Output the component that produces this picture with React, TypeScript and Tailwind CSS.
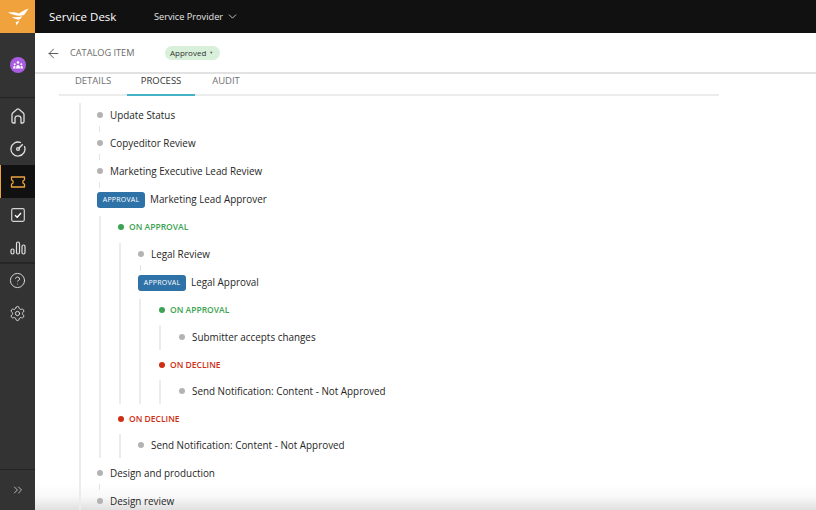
import React from 'react';
import { ArrowLeft, ChevronDown, ChevronsRight, CircleHelp, Settings } from 'lucide-react';

const Logo = () => (
  <svg width="22" height="18" viewBox="0 0 22 18" fill="white">
    <path d="M1 4.5 C6 4 9 4.5 12 5.5 C15 3.5 18 1.5 21.5 0.5 C20 3 18.5 5 17 7 C13 8.5 6 7.5 1 4.5Z" />
    <path d="M5 9 C9 9.3 12 9.2 15.5 8.2 C14.5 9.8 13.5 10.8 12 11.8 C10 11.6 7.5 10.8 5 9Z" />
    <path d="M8.5 14.5 C10 13.8 11 13.2 12.5 12.8 C11.5 14.5 10.5 16 9 17.5 C9.2 16.2 9.2 15.2 8.5 14.5Z" />
  </svg>
);

const HomeIcon = () => (
  <svg width="14" height="16" viewBox="0 0 14 16" fill="none" stroke="#e0e0e0" strokeWidth="1.3" strokeLinejoin="round">
    <path d="M1 6.5 Q1 5.6 1.7 5 L6 1.3 Q7 0.6 8 1.3 L12.3 5 Q13 5.6 13 6.5 V13.5 Q13 15 11.5 15 H10 V10.5 Q10 7.8 7 7.8 Q4 7.8 4 10.5 V15 H2.5 Q1 15 1 13.5Z" />
  </svg>
);

const GaugeIcon = () => (
  <svg width="16" height="16" viewBox="0 0 16 16" fill="none" stroke="#e0e0e0" strokeWidth="1.3" strokeLinecap="round">
    <path d="M10.5 1.5 A7 7 0 1 0 14.5 5.5" />
    <circle cx="8" cy="8" r="1.4" />
    <path d="M9 7 L12.3 3.7" strokeWidth="1.5" />
  </svg>
);

const TicketIcon = () => (
  <svg width="16" height="12" viewBox="0 0 16 12" fill="none" stroke="#f0a33c" strokeWidth="1.3" strokeLinejoin="round">
    <path d="M1.5 1 H14.5 V3.8 Q12.8 4.2 12.8 6 Q12.8 7.8 14.5 8.2 V11 H1.5 V8.2 Q3.2 7.8 3.2 6 Q3.2 4.2 1.5 3.8Z" />
  </svg>
);

const CheckIcon = () => (
  <svg width="14" height="14" viewBox="0 0 14 14" fill="none" stroke="#d4d4d4" strokeWidth="1.2">
    <rect x="0.7" y="0.7" width="12.6" height="12.6" rx="1.5" />
    <path d="M4 7.2 L6.2 9.2 L10 5" strokeWidth="1.4" stroke="white" />
  </svg>
);

const BarsIcon = () => (
  <svg width="16" height="14" viewBox="0 0 16 14" fill="none" stroke="#e0e0e0" strokeWidth="1.2">
    <rect x="1" y="8" width="3" height="5" rx="1.5" />
    <rect x="6.5" y="1" width="3" height="12" rx="1.5" />
    <rect x="12" y="4" width="3" height="9" rx="1.5" />
  </svg>
);

const TeamIcon = () => (
  <svg width="10" height="8" viewBox="0 0 10 8" fill="white">
    <circle cx="5" cy="1.5" r="1.3" />
    <circle cx="1.7" cy="3.2" r="1" />
    <circle cx="8.3" cy="3.2" r="1" />
    <path d="M3 7.5 Q3 4 5 4 Q7 4 7 7.5Z" />
    <path d="M0 7.5 Q0 4.8 1.7 4.8 Q2.6 4.8 2.6 7.5Z" />
    <path d="M10 7.5 Q10 4.8 8.3 4.8 Q7.4 4.8 7.4 7.5Z" />
  </svg>
);

const NavItem: React.FC<{ active?: boolean; children: React.ReactNode }> = ({ active, children }) => (
  <div className={`h-[33px] shrink-0 flex items-center justify-center ${active ? 'bg-[#111111] border-l border-[#f0a33c]' : ''}`}>
    {children}
  </div>
);

const Sidebar = () => (
  <aside className="w-[35px] shrink-0 bg-[#333333] flex flex-col z-20">
    <div className="h-[33px] shrink-0 bg-[#f0a33c] flex items-center justify-center">
      <Logo />
    </div>
    <div className="h-[65px] shrink-0 flex items-center justify-center border-b border-[#232323]">
      <div className="w-4 h-4 rounded-full bg-[#a95ce0] flex items-center justify-center">
        <TeamIcon />
      </div>
    </div>
    <div className="h-[166px] shrink-0 pt-px border-b-2 border-[#262626]">
      <NavItem><HomeIcon /></NavItem>
      <NavItem><GaugeIcon /></NavItem>
      <NavItem active><TicketIcon /></NavItem>
      <NavItem><CheckIcon /></NavItem>
      <NavItem><BarsIcon /></NavItem>
    </div>
    <NavItem><CircleHelp size={17} strokeWidth={1.3} color="#e0e0e0" /></NavItem>
    <NavItem><Settings size={17} strokeWidth={1.3} color="#e0e0e0" /></NavItem>
    <div className="mt-auto h-[41px] border-t border-[#232323] flex items-center justify-center">
      <ChevronsRight size={14} strokeWidth={1.3} color="#e0e0e0" />
    </div>
  </aside>
);

const Step: React.FC<{ text: string; dot?: string }> = ({ text, dot = 'ml-[16px]' }) => (
  <div className="h-[22px] flex items-center">
    <span className={`w-[6px] h-[6px] rounded-full bg-[#b3b3b3] mr-[7px] ${dot}`} />
    <span className="text-[#262626]">{text}</span>
  </div>
);

const Connector: React.FC<{ className?: string }> = ({ className = 'ml-[18px]' }) => (
  <div className={`h-[6px] w-px bg-[#e2e2e2] ${className}`} />
);

const Approval: React.FC<{ text: string; badge?: string }> = ({ text, badge = 'ml-[16px]' }) => (
  <div className="h-[22px] flex items-center">
    <span className={`h-4 w-[48px] mt-[2px] mr-[5px] rounded-[3px] bg-[#2f72a8] text-white text-[7px] tracking-[0.2px] flex items-center justify-center ${badge}`}>
      APPROVAL
    </span>
    <span className="text-[#262626]">{text}</span>
  </div>
);

const Outcome: React.FC<{ text: string; green?: boolean; dot: string; className?: string }> = ({ text, green, dot, className }) => (
  <div className={`h-[22px] flex items-center ${className ?? ''}`}>
    <span className={`w-[6px] h-[6px] rounded-full mr-[5px] ${dot} ${green ? 'bg-[#3ba351]' : 'bg-[#cf2e14]'}`} />
    <span className={`text-[8.5px] font-semibold ${green ? 'text-[#3ba351]' : 'text-[#cf2e14]'}`}>{text}</span>
  </div>
);

const Branch: React.FC<{ className?: string; children: React.ReactNode }> = ({ className, children }) => (
  <div className={`border-l-2 border-[#ececec] ml-[18px] ${className ?? ''}`}>{children}</div>
);

const Tree = () => (
  <div className="relative z-10 ml-[44px] mt-[7px] border-l-2 border-[#ececec] pt-px text-[9.9px]">
    <Step text="Update Status" />
    <Connector />
    <Step text="Copyeditor Review" />
    <Connector />
    <Step text="Marketing Executive Lead Review" />
    <Connector />
    <Approval text="Marketing Lead Approver" />
    <Branch className="mt-[6px]">
      <Outcome text="ON APPROVAL" green dot="ml-[17px]" />
      <Branch className="mt-[5px]">
        <Step text="Legal Review" dot="ml-[17px]" />
        <Connector className="ml-[19px]" />
        <Approval text="Legal Approval" badge="ml-[17px]" />
        <Branch className="mt-[6px]">
          <Outcome text="ON APPROVAL" green dot="ml-[18px]" />
          <Branch className="mt-[4px] pt-px pb-[2px]">
            <Step text="Submitter accepts changes" dot="ml-[18px]" />
          </Branch>
          <Outcome text="ON DECLINE" dot="ml-[18px]" className="mt-[4px]" />
          <Branch className="mt-[4px] pb-[2px]">
            <Step text="Send Notification: Content - Not Approved" dot="ml-[18px]" />
          </Branch>
        </Branch>
      </Branch>
      <Outcome text="ON DECLINE" dot="ml-[17px]" className="mt-[4px]" />
      <Branch className="mt-[4px] pb-[2px]">
        <Step text="Send Notification: Content - Not Approved" dot="ml-[17px]" />
      </Branch>
    </Branch>
    <div className="h-[4px]" />
    <Step text="Design and production" />
    <Connector />
    <Step text="Design review" />
  </div>
);

export default function App() {
  return (
    <div className="relative w-[816px] h-[510px] overflow-hidden flex bg-white font-['Open_Sans',sans-serif]">
      <Sidebar />
      <div className="flex-1 min-w-0 flex flex-col">
        <header className="h-[33px] shrink-0 bg-[#111111] flex items-center text-white pl-[14px]">
          <span className="text-[11.5px] font-medium w-[105px]">Service Desk</span>
          <span className="text-[9.2px] text-[#e6e6e6]">Service Provider</span>
          <ChevronDown size={13} strokeWidth={1.5} color="#e6e6e6" className="ml-[3px]" />
        </header>
        <div className="h-[41px] shrink-0 flex items-center border-b-2 border-[#e2e2e2] pt-px">
          <ArrowLeft size={15} strokeWidth={1.4} color="#444444" className="ml-[11px]" />
          <span className="ml-[9px] w-[95px] text-[9.2px] text-[#6b6b6b]">CATALOG ITEM</span>
          <span className="h-[14px] pl-[5px] w-[55px] rounded-full bg-[#d8efd9] text-[#333333] text-[8px] flex items-center gap-[3px]">
            Approved
            <span className="text-[4px] text-[#555555]">▼</span>
          </span>
        </div>
        <nav className="ml-[24px] w-[660px] h-[22px] shrink-0 flex border-b-2 border-[#ececec] text-[9.5px] text-[#6f6f6f]">
          <div className="w-[68px] h-[20px] pb-[5px] flex items-center justify-center">DETAILS</div>
          <div className="w-[68px] h-[22px] pb-[5px] flex items-center justify-center border-b-2 border-[#45b3c7] text-[#333333] font-medium">
            PROCESS
          </div>
          <div className="w-[62px] h-[20px] pb-[5px] flex items-center justify-center">AUDIT</div>
        </nav>
        <Tree />
      </div>
      <div className="absolute left-[35px] right-0 bottom-0 h-[26px] bg-gradient-to-b from-transparent via-[#f8f8f8] to-[#e0e0e0] pointer-events-none" />
    </div>
  );
}
